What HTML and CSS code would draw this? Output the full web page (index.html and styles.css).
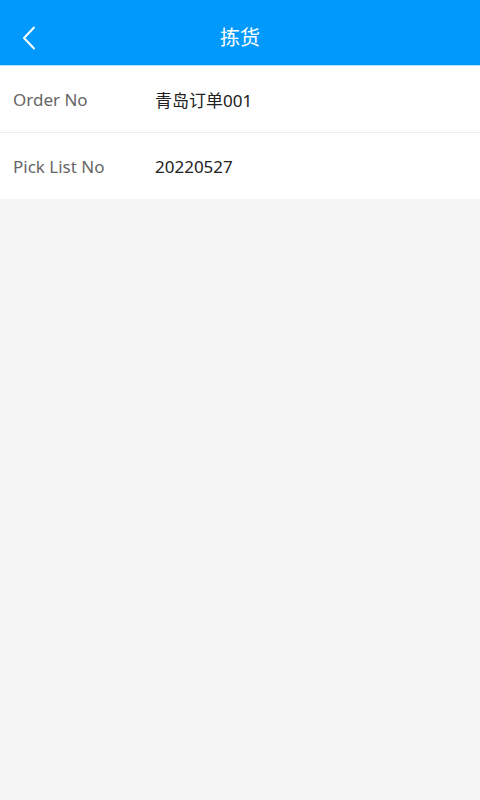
FILE: index.html
```html
<!DOCTYPE html>
<html lang="zh-CN">
<head>
    <meta charset="UTF-8">
    <meta name="viewport" content="width=device-width, initial-scale=1.0">
    <title>拣货</title>
    <link rel="stylesheet" href="styles.css">
</head>
<body>
    <header class="nav-bar">
        <span class="back">
            <svg width="14" height="24" viewBox="0 0 14 24"><path d="M12 1.5 L2 12 L12 22.5" fill="none" stroke="#fff" stroke-width="2" stroke-linecap="round" stroke-linejoin="round"/></svg>
        </span>
        <h1>拣货</h1>
    </header>
    <div class="form">
        <div class="row">
            <span class="label">Order No</span>
            <span class="value">青岛订单001</span>
        </div>
        <div class="row">
            <span class="label">Pick List No</span>
            <span class="value">20220527</span>
        </div>
    </div>
</body>
</html>
```
FILE: styles.css
```css
body {
    font-family: "Noto Sans", "Noto Sans CJK SC", sans-serif;
    margin: 0;
    padding: 0;
    background-color: #f5f5f5;
    width: 480px;
    height: 800px;
}

.nav-bar {
    background-color: #0299fd;
    height: 57px;
    padding-top: 8px;
    display: flex;
    align-items: center;
    justify-content: center;
    position: relative;
    border-bottom: 1px solid #b8e6fb;
}

.nav-bar h1 {
    margin: 0;
    color: #fff;
    font-size: 20px;
    font-weight: normal;
}

.back {
    position: absolute;
    left: 22px;
    top: 26px;
    display: flex;
}

.form {
    background-color: #fff;
}

.row {
    height: 66px;
    display: flex;
    align-items: center;
    padding-left: 13px;
    font-size: 17px;
}

.row + .row {
    border-top: 1px solid #ececec;
}

.label {
    width: 142px;
    color: #666;
}

.value {
    color: #222;
}
```
